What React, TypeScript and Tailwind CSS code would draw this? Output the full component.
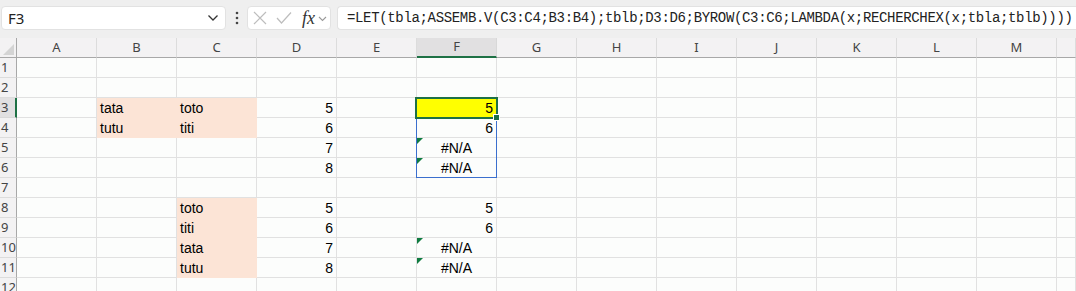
import React from "react";

type Cell = { v: string; kind?: "text" | "num" | "err"; fill?: "peach" | "yellow"; tri?: boolean };

const COLS = ["A", "B", "C", "D", "E", "F", "G", "H", "I", "J", "K", "L", "M", ""];

const data: Record<string, Cell> = {
  B3: { v: "tata", kind: "text", fill: "peach" },
  C3: { v: "toto", kind: "text", fill: "peach" },
  D3: { v: "5", kind: "num" },
  F3: { v: "5", kind: "num", fill: "yellow" },
  B4: { v: "tutu", kind: "text", fill: "peach" },
  C4: { v: "titi", kind: "text", fill: "peach" },
  D4: { v: "6", kind: "num" },
  F4: { v: "6", kind: "num" },
  D5: { v: "7", kind: "num" },
  F5: { v: "#N/A", kind: "err", tri: true },
  D6: { v: "8", kind: "num" },
  F6: { v: "#N/A", kind: "err", tri: true },
  C8: { v: "toto", kind: "text", fill: "peach" },
  D8: { v: "5", kind: "num" },
  F8: { v: "5", kind: "num" },
  C9: { v: "titi", kind: "text", fill: "peach" },
  D9: { v: "6", kind: "num" },
  F9: { v: "6", kind: "num" },
  C10: { v: "tata", kind: "text", fill: "peach" },
  D10: { v: "7", kind: "num" },
  F10: { v: "#N/A", kind: "err", tri: true },
  C11: { v: "tutu", kind: "text", fill: "peach" },
  D11: { v: "8", kind: "num" },
  F11: { v: "#N/A", kind: "err", tri: true },
};

function DataCell({ id }: { id: string }) {
  const c = data[id];
  const fillCls =
    c?.fill === "peach"
      ? "bg-[#fce4d6] border-[#fce4d6]"
      : c?.fill === "yellow"
      ? "bg-[#ffff00] border-[#e0e0e0]"
      : "bg-[#fcfdfc] border-[#e1e1e1]";
  const align =
    c?.kind === "num" ? "justify-end pr-[3px]" : c?.kind === "err" ? "justify-center" : "justify-start pl-[3px]";
  return (
    <div className={`relative flex h-[20px] items-end border-r border-b ${fillCls} ${align}`}>
      {c?.tri && (
        <div className="absolute left-0 top-0 h-0 w-0 border-t-[6px] border-r-[6px] border-t-[#107c41] border-r-transparent" />
      )}
      {c && <span className="leading-[17px] text-[14px] text-black">{c.v}</span>}
    </div>
  );
}

export default function App() {
  const rows = Array.from({ length: 12 }, (_, i) => i + 1);
  return (
    <div
      className="h-[291px] w-[1076px] overflow-hidden bg-[#fcfdfc]"
      style={{ fontFamily: "'Liberation Sans', Arial, sans-serif" }}
    >
      {/* Formula bar */}
      <div className="flex h-[38px] items-start bg-[#efefef] pt-[6px]">
        <div className="ml-[1px] flex h-[24px] w-[225px] shrink-0 items-center justify-between rounded-[4px] border border-[#e2e2e2] bg-white pl-[6px] pr-[6px]">
          <span className="text-[15px] text-[#222]" style={{ fontFamily: "'Noto Sans', sans-serif" }}>
            F3
          </span>
          <svg width="12" height="8" viewBox="0 0 12 8">
            <path d="M1.5 1.5 L6 6 L10.5 1.5" fill="none" stroke="#333" strokeWidth="1.3" />
          </svg>
        </div>
        <div className="flex h-[24px] w-[21px] shrink-0 items-center justify-center">
          <svg width="4" height="14" viewBox="0 0 4 14">
            <circle cx="2" cy="2" r="1.3" fill="#444" />
            <circle cx="2" cy="7" r="1.3" fill="#444" />
            <circle cx="2" cy="12" r="1.3" fill="#444" />
          </svg>
        </div>
        <div className="flex h-[24px] w-[84px] shrink-0 items-center rounded-[4px] border border-[#e2e2e2] bg-white pl-[5px]">
          <svg width="14" height="14" viewBox="0 0 14 14">
            <path d="M1 1 L13 13 M13 1 L1 13" stroke="#bdbdbd" strokeWidth="1.2" />
          </svg>
          <svg width="16" height="14" viewBox="0 0 16 14" className="ml-[9px]">
            <path d="M1 7 L5.5 12 L15 1.5" fill="none" stroke="#bdbdbd" strokeWidth="1.2" />
          </svg>
          <span
            className="ml-[10px] text-[18px] italic leading-none text-[#333]"
            style={{ fontFamily: "'Liberation Serif', serif" }}
          >
            fx
          </span>
          <svg width="9" height="6" viewBox="0 0 9 6" className="ml-[3px] mt-[2px]">
            <path d="M1 1 L4.5 4.5 L8 1" fill="none" stroke="#9a9a9a" strokeWidth="1.1" />
          </svg>
        </div>
        <div className="ml-[6px] flex h-[24px] min-w-0 flex-1 items-center overflow-hidden rounded-l-[4px] border border-r-0 border-[#e2e2e2] bg-white pl-[9px]">
          <span
            className="whitespace-nowrap text-[14px] tracking-[-0.34px] text-[#222]"
            style={{ fontFamily: "'Liberation Mono', monospace" }}
          >
            =LET(tbla;ASSEMB.V(C3:C4;B3:B4);tblb;D3:D6;BYROW(C3:C6;LAMBDA(x;RECHERCHEX(x;tbla;tblb))))
          </span>
        </div>
      </div>

      {/* Grid */}
      <div className="relative">
        <div className="grid grid-cols-[17px_repeat(13,80px)_1fr]">
          <div className="relative h-[20px] border-r border-b border-[#a8a8a8] bg-[#f3f2f3]">
            <div className="absolute bottom-[2px] right-[2px] h-0 w-0 border-b-[11px] border-l-[11px] border-b-[#d4d4d4] border-l-transparent" />
          </div>
          {COLS.map((c) => (
            <div
              key={c || "N"}
              className={`flex h-[20px] items-center justify-center border-r text-[13px] ${
                c === "F"
                  ? "border-b-2 border-b-[#1e7145] border-r-[#d8d8d8] bg-[#e1e0e1]"
                  : "border-b border-b-[#a8a8a8] border-r-[#dcdcdc] bg-[#f3f2f3]"
              } text-[#444]`}
              style={{ fontFamily: "'Noto Sans', sans-serif" }}
            >
              {c}
            </div>
          ))}
          {rows.map((r) => (
            <React.Fragment key={r}>
              <div
                className={`flex h-[20px] items-center pl-[1px] text-[13px] text-[#444] ${
                  r === 3
                    ? "border-r-2 border-r-[#1e7145] bg-[#e1e0e1] border-b border-b-[#d8d8d8]"
                    : "border-r border-r-[#a8a8a8] bg-[#f3f2f3] border-b border-b-[#dcdcdc]"
                }`}
                style={{ fontFamily: "'Noto Sans', sans-serif" }}
              >
                {r}
              </div>
              {COLS.map((c) => (
                <DataCell key={c + r} id={c ? `${c}${r}` : `N${r}`} />
              ))}
            </React.Fragment>
          ))}
        </div>

        <div className="pointer-events-none absolute left-[416px] top-[60px] h-[80px] w-[81px] border border-[#3b6fce]" />
        <div className="pointer-events-none absolute left-[415px] top-[59px] h-[22px] w-[83px] border-2 border-[#1e7145]" />
        <div className="pointer-events-none absolute left-[493px] top-[76px] h-[7px] w-[7px] border border-white bg-[#1e7145]" />
      </div>
    </div>
  );
}
